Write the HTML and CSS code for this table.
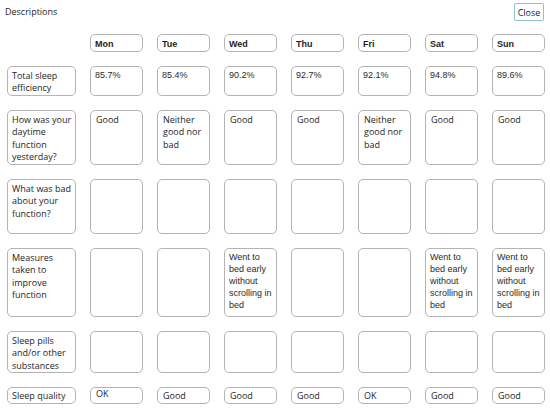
FILE: index.html
```html
<!DOCTYPE html>
<html>
<head>
<meta charset="utf-8">
<link rel="stylesheet" href="styles.css">
</head>
<body>
<div class="top">
  <span class="title">Descriptions</span>
  <button class="close">Close</button>
</div>
<div class="grid">
  <div></div>
  <div class="cell head">Mon</div>
  <div class="cell head">Tue</div>
  <div class="cell head">Wed</div>
  <div class="cell head">Thu</div>
  <div class="cell head">Fri</div>
  <div class="cell head">Sat</div>
  <div class="cell head">Sun</div>

  <div class="cell label">Total sleep efficiency</div>
  <div class="cell num">85.7%</div>
  <div class="cell num">85.4%</div>
  <div class="cell num">90.2%</div>
  <div class="cell num">92.7%</div>
  <div class="cell num">92.1%</div>
  <div class="cell num">94.8%</div>
  <div class="cell num">89.6%</div>

  <div class="cell label">How was your daytime function yesterday?</div>
  <div class="cell val">Good</div>
  <div class="cell val">Neither good nor bad</div>
  <div class="cell val">Good</div>
  <div class="cell val">Good</div>
  <div class="cell val">Neither good nor bad</div>
  <div class="cell val">Good</div>
  <div class="cell val">Good</div>

  <div class="cell label">What was bad about your function?</div>
  <div class="cell val"></div>
  <div class="cell val"></div>
  <div class="cell val"></div>
  <div class="cell val"></div>
  <div class="cell val"></div>
  <div class="cell val"></div>
  <div class="cell val"></div>

  <div class="cell label">Measures taken to improve function</div>
  <div class="cell num"></div>
  <div class="cell num"></div>
  <div class="cell num">Went to bed early without scrolling in bed</div>
  <div class="cell num"></div>
  <div class="cell num"></div>
  <div class="cell num">Went to bed early without scrolling in bed</div>
  <div class="cell num">Went to bed early without scrolling in bed</div>

  <div class="cell label">Sleep pills and/or other substances</div>
  <div class="cell val"></div>
  <div class="cell val"></div>
  <div class="cell val"></div>
  <div class="cell val"></div>
  <div class="cell val"></div>
  <div class="cell val"></div>
  <div class="cell val"></div>

  <div class="cell label short">Sleep quality</div>
  <div class="cell val short high">OK</div>
  <div class="cell val short">Good</div>
  <div class="cell val short">Good</div>
  <div class="cell val short">Good</div>
  <div class="cell val short">OK</div>
  <div class="cell val short">Good</div>
  <div class="cell val short">Good</div>
</div>
</body>
</html>
```
FILE: styles.css
```css
html, body {
  margin: 0;
  padding: 0;
  background: #fff;
}
body {
  width: 550px;
  height: 409px;
  overflow: hidden;
  font-family: "Segoe UI", "Open Sans", sans-serif;
  color: #1e1e1e;
}
.top {
  height: 34px;
  display: flex;
  justify-content: space-between;
  align-items: flex-start;
  padding: 0 6px 0 5px;
  box-sizing: border-box;
}
.title {
  font-size: 9px;
  line-height: 12px;
  margin-top: 6px;
}
.close {
  margin-top: 3px;
  width: 30px;
  height: 18px;
  padding: 0;
  border: 1px solid #8ec3d3;
  border-radius: 2px;
  background: #fff;
  font-family: "Segoe UI", "Open Sans", sans-serif;
  font-size: 9px;
  color: #1e1e1e;
}
.grid {
  display: grid;
  margin-left: 7px;
  grid-template-columns: 69px repeat(7, 53px);
  grid-template-rows: 18px 30px 55px 55px 69px 42px 17px;
  column-gap: 14px;
  row-gap: 14px;
}
.cell {
  border: 1px solid #b4b4b4;
  border-radius: 5px;
  box-sizing: border-box;
  padding: 3px 4px 0 4px;
  font-size: 9px;
  line-height: 12.3px;
  overflow: hidden;
}
.head {
  font-family: "Liberation Sans", Arial, sans-serif;
  font-weight: bold;
  padding-top: 3px;
}
.num {
  font-family: "Liberation Sans", Arial, sans-serif;
  line-height: 12px;
  padding-top: 2px;
  color: #2a2a2a;
}
.label {
  padding-left: 4px;
  padding-right: 0;
}
.val {
  padding-left: 5px;
  padding-right: 1px;
}
.short {
  padding-top: 2px;
}
.short.high {
  padding-top: 0;
}
```
